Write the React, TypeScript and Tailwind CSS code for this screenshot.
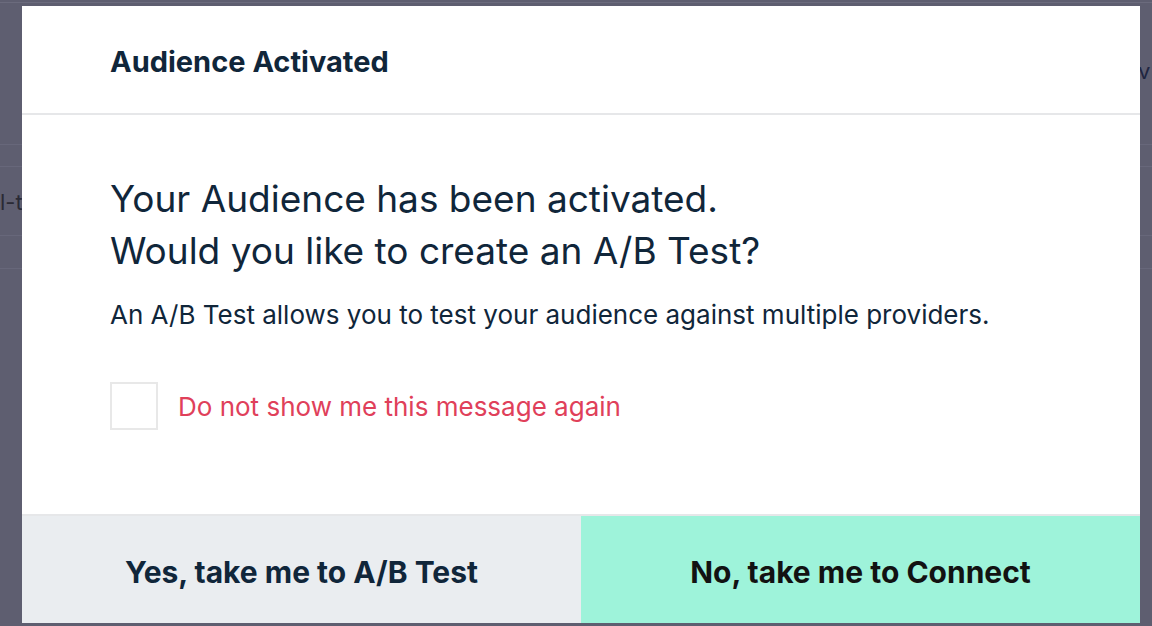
import { useState } from 'react';

const font = { fontFamily: 'Inter, "Open Sans", sans-serif' };

function Backdrop() {
  return (
    <div className="absolute inset-0 bg-[#5e5e70]">
      <div className="h-[3px] border-b border-[#6b6b7d]" />
      <div className="absolute top-[144px] left-0 right-0 border-t border-[#67677a]" />
      <div className="absolute top-[166px] left-0 right-0 border-t border-[#67677a]" />
      <div className="absolute top-[186px] left-0 text-[22px] text-[#2a2a35]">l-t</div>
      <div className="absolute top-[235px] left-0 right-0 border-t border-[#67677a]" />
      <div className="absolute top-[268px] left-0 right-0 border-t border-[#67677a]" />
      <div className="absolute top-[55px] left-[1138px] text-[22px] text-[#1f2540]">v</div>
    </div>
  );
}

export default function App() {
  const [dontShow, setDontShow] = useState(false);

  return (
    <div className="relative w-[1152px] h-[626px] overflow-hidden" style={font}>
      <Backdrop />
      <div className="absolute left-[22px] top-[6px] w-[1118px] h-[617px] bg-white flex flex-col">
        <div className="h-[109px] flex items-center px-[88px] pt-[5px] border-b-2 border-[#e6e7e9]">
          <h2 className="text-[29px] font-bold text-[#10263a]">Audience Activated</h2>
        </div>

        <div className="flex-1 px-[88px] pt-[58px]">
          <h1 className="text-[37px] leading-[52px] text-[#10263a]">
            Your Audience has been activated.
            <br />
            Would you like to create an A/B Test?
          </h1>
          <p className="mt-[18px] text-[26px] text-[#10263a]">
            An A/B Test allows you to test your audience against multiple providers.
          </p>
          <label className="mt-[48px] flex items-center gap-[20px] cursor-pointer">
            <span
              onClick={() => setDontShow(!dontShow)}
              className="w-[48px] h-[48px] border-2 border-[#e8e8e8] bg-white"
            />
            <span className="text-[26px] text-[#e0405a]">Do not show me this message again</span>
          </label>
        </div>

        <div className="h-[109px] grid grid-cols-2 border-t-2 border-[#e6e7e9]">
          <button className="bg-[#eaedf0] text-[30px] font-bold text-[#10263a] pt-[6px]">
            Yes, take me to A/B Test
          </button>
          <button className="bg-[#9ef3da] text-[30px] font-bold text-[#121212] pt-[6px]">
            No, take me to Connect
          </button>
        </div>
      </div>
    </div>
  );
}
